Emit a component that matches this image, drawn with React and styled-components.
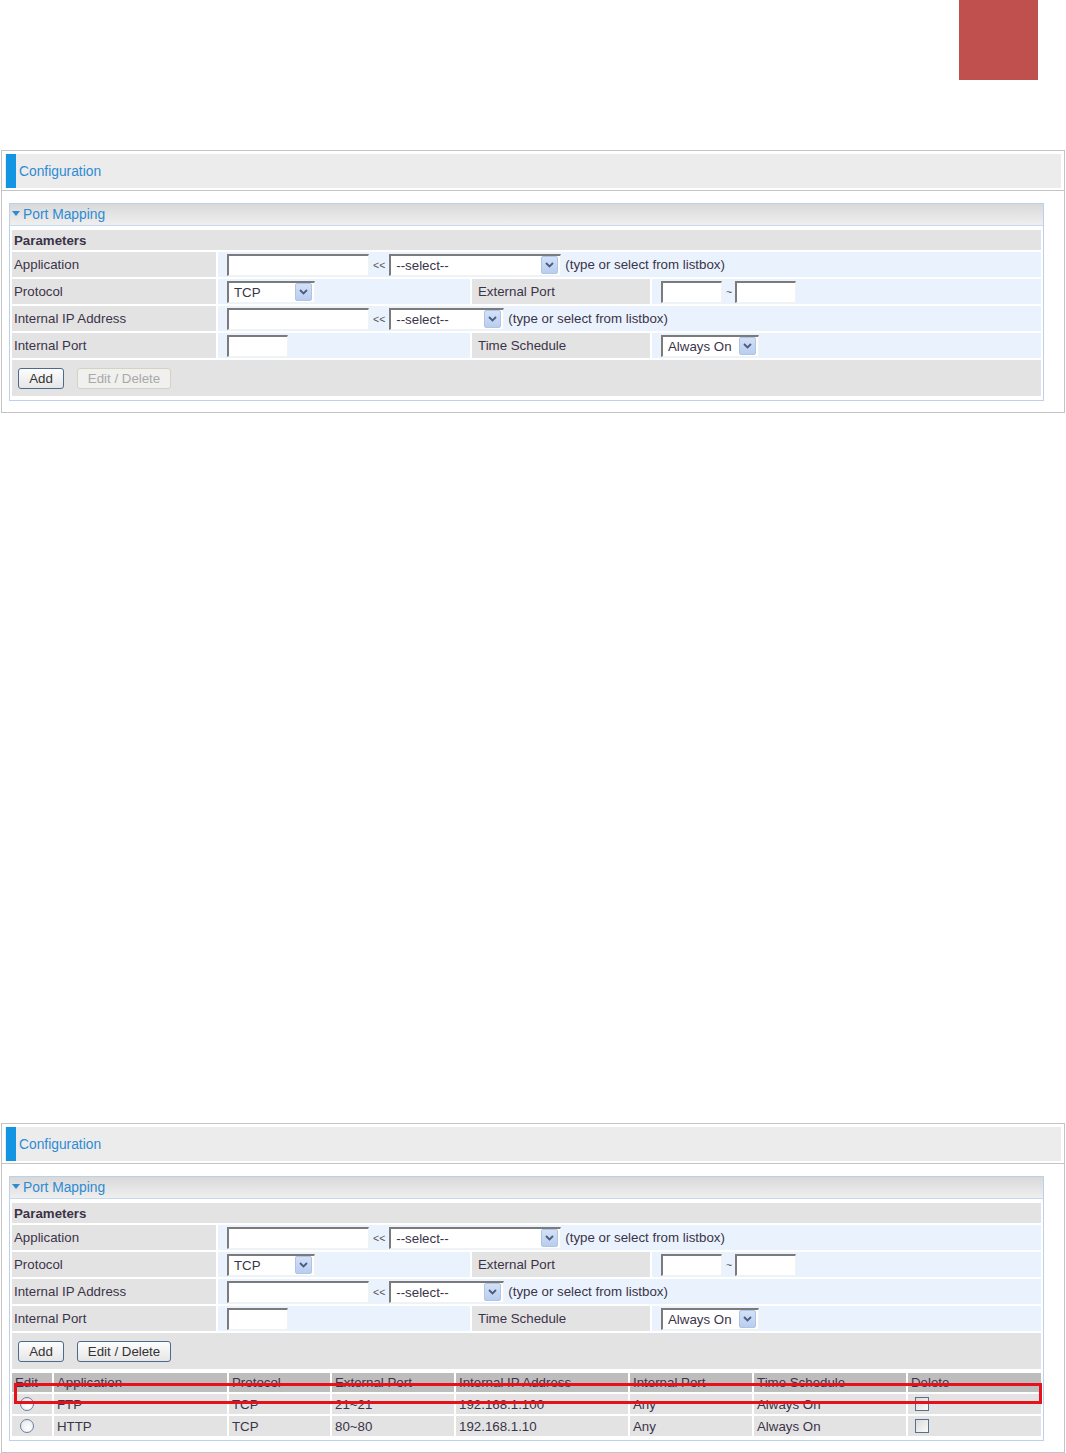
import React from 'react'
import styled, { createGlobalStyle } from 'styled-components'

const GlobalStyle = createGlobalStyle`
  body {
    margin: 0;
    background: #fff;
    font-family: "Liberation Sans", Arial, sans-serif;
    font-size: 13.3px;
    color: #3b3348;
  }
`;

const Page = styled.div`
  width: 1066px;
`;

const TopBar = styled.div`
  height: 150px;
  display: flex;
  justify-content: flex-end;
  padding-right: 28px;
  box-sizing: border-box;
`;

const RedBlock = styled.div`
  width: 79px;
  height: 80px;
  background: #c0504d;
`;

const Panel = styled.div`
  margin: ${(p) => (p.second ? '710px' : '0')} 1px 0 1px;
  border: 1px solid #c4c4c4;
`;

const ConfigHead = styled.div`
  padding: 3px 3px 2px;
  border-bottom: 1px solid #c4c4c4;
`;

const ConfigTitle = styled.div`
  height: 34px;
  background: #ececec;
  display: flex;
  align-items: center;
  padding-left: 1px;
  color: #2e8bd3;
  font-size: 13.8px;
`;

const BlueBar = styled.span`
  width: 10px;
  height: 34px;
  background: #1495e3;
  margin-right: 3px;
`;

const PanelBody = styled.div`
  padding: 12px 20px 11px 7px;
`;

const Box = styled.div`
  border: 1px solid #bcd1e9;
  padding-bottom: 2px;
`;

const BoxHead = styled.div`
  height: 21px;
  display: flex;
  align-items: center;
  padding-left: 2px;
  background: linear-gradient(#d9d9d9, #efefef);
  border-bottom: 1px solid #c7d9ee;
  color: #2e8bd3;
  font-size: 13.8px;
`;

const Caret = styled.span`
  width: 0;
  height: 0;
  border-left: 4px solid transparent;
  border-right: 4px solid transparent;
  border-top: 5px solid #2e8bd3;
  margin: 0 3px 2px 0;
`;

const Table = styled.table`
  width: 100%;
  border-collapse: separate;
  border-spacing: 2px;
  table-layout: fixed;
  margin-top: ${(p) => p.mt || 0}px;
`;

const Cell = styled.td`
  height: ${(p) => p.h || 25}px;
  padding: 0 0 0 ${(p) => p.pad ?? 2}px;
  background: ${(p) =>
    p.kind === 'value' ? '#eaf3fd' : p.kind === 'head' ? '#bdbdbd' : '#e3e3e3'};
  font-weight: ${(p) => (p.bold ? 'bold' : 'normal')};
  white-space: nowrap;
  vertical-align: middle;
`;

const Inline = styled.div`
  display: flex;
  align-items: center;
`;

const TextInput = styled.input`
  box-sizing: border-box;
  width: ${(p) => p.w}px;
  height: 22px;
  margin: 0;
  padding: 0 4px;
  background: #fff;
  border-style: solid;
  border-width: 2px 1px 1px 2px;
  border-color: #7b7b7b #f2f2ee #f2f2ee #7b7b7b;
  font: inherit;
`;

const Select = styled.div`
  box-sizing: border-box;
  width: ${(p) => p.w}px;
  height: 22px;
  display: flex;
  align-items: center;
  justify-content: space-between;
  padding: 0 2px 0 5px;
  background: #fff;
  border-style: solid;
  border-width: 2px 1px 1px 2px;
  border-color: #7b7b7b #f2f2ee #f2f2ee #7b7b7b;
`;

const ArrowBox = styled.span`
  width: 15px;
  height: 16px;
  border: 1px solid #b0c4e6;
  border-radius: 2px;
  background: linear-gradient(#d3e1f7, #b9cdef);
  display: flex;
  align-items: center;
  justify-content: center;
`;

const Sep = styled.span`
  font-size: 10.5px;
  color: #555;
  margin: 0 ${(p) => p.r || 4}px 0 4px;
`;

const Note = styled.span`
  margin-left: 4px;
`;

const Button = styled.button`
  height: 21px;
  width: ${(p) => p.w}px;
  margin-right: ${(p) => p.mr || 0}px;
  padding: 0;
  font: inherit;
  border-radius: 3px;
  border: 1px solid ${(p) => (p.disabled ? '#d6d2c2' : '#4b6a8e')};
  background: ${(p) =>
    p.disabled ? '#f0f0ee' : 'linear-gradient(#fdfdfd, #e6e6e6)'};
  color: ${(p) => (p.disabled ? '#a9a9a9' : '#333')};
`;

const ListWrap = styled.div`
  position: relative;
`;

const Radio = styled.span`
  display: block;
  width: 12px;
  height: 12px;
  margin-left: 6px;
  border-radius: 50%;
  border: 1px solid #6c7f99;
  background: radial-gradient(circle at 60% 65%, #fff, #dfe4ea);
`;

const Check = styled.span`
  display: block;
  width: 12px;
  height: 12px;
  margin-left: 5px;
  border: 1px solid #5a6f8c;
  background: linear-gradient(135deg, #dcdcdc, #fafafa);
`;

const Highlight = styled.div`
  position: absolute;
  left: 4px;
  top: 12px;
  width: 1028px;
  height: 21px;
  box-sizing: border-box;
  border: 3px solid #e6121b;
  pointer-events: none;
`;

const Chevron = () => (
  <svg width="9" height="6" viewBox="0 0 9 6">
    <path d="M1 1 L4.5 4.5 L8 1" fill="none" stroke="#4a5d80" strokeWidth="1.8" />
  </svg>
);

const Drop = ({ w, value }) => (
  <Select w={w}>
    <span>{value}</span>
    <ArrowBox>
      <Chevron />
    </ArrowBox>
  </Select>
);

const columns = [
  ['Edit', 40],
  ['Application', 173],
  ['Protocol', 101],
  ['External Port', 122],
  ['Internal IP Address', 172],
  ['Internal Port', 122],
  ['Time Schedule', 152],
  ['Delete', 133],
];

const entries = [
  ['FTP', 'TCP', '21~21', '192.168.1.100', 'Any', 'Always On'],
  ['HTTP', 'TCP', '80~80', '192.168.1.10', 'Any', 'Always On'],
];

const MappingForm = ({ canEdit }) => (
  <Table mt={2}>
    <colgroup>
      <col style={{ width: 204 }} />
      <col style={{ width: 252 }} />
      <col style={{ width: 178 }} />
      <col />
    </colgroup>
    <tbody>
      <tr>
        <Cell colSpan={4} bold h={20}>Parameters</Cell>
      </tr>
      <tr>
        <Cell>Application</Cell>
        <Cell kind="value" colSpan={3} pad={9}>
          <Inline>
            <TextInput w={142} />
            <Sep>&lt;&lt;</Sep>
            <Drop w={172} value="--select--" />
            <Note>(type or select from listbox)</Note>
          </Inline>
        </Cell>
      </tr>
      <tr>
        <Cell>Protocol</Cell>
        <Cell kind="value" pad={9}>
          <Drop w={88} value="TCP" />
        </Cell>
        <Cell pad={6}>External Port</Cell>
        <Cell kind="value" pad={9}>
          <Inline>
            <TextInput w={61} />
            <Sep r={3}>~</Sep>
            <TextInput w={61} />
          </Inline>
        </Cell>
      </tr>
      <tr>
        <Cell>Internal IP Address</Cell>
        <Cell kind="value" colSpan={3} pad={9}>
          <Inline>
            <TextInput w={142} />
            <Sep>&lt;&lt;</Sep>
            <Drop w={115} value="--select--" />
            <Note>(type or select from listbox)</Note>
          </Inline>
        </Cell>
      </tr>
      <tr>
        <Cell>Internal Port</Cell>
        <Cell kind="value" pad={9}>
          <TextInput w={61} />
        </Cell>
        <Cell pad={6}>Time Schedule</Cell>
        <Cell kind="value" pad={9}>
          <Drop w={98} value="Always On" />
        </Cell>
      </tr>
      <tr>
        <Cell colSpan={4} h={36} pad={6}>
          <Button w={46} mr={13}>Add</Button>
          <Button w={94} disabled={!canEdit}>Edit / Delete</Button>
        </Cell>
      </tr>
    </tbody>
  </Table>
);

const MappingList = () => (
  <ListWrap>
    <Table>
      <colgroup>
        {columns.map(([name, w]) => (
          <col key={name} style={{ width: w }} />
        ))}
      </colgroup>
      <tbody>
        <tr>
          {columns.map(([name]) => (
            <Cell key={name} kind="head" h={19} pad={3}>{name}</Cell>
          ))}
        </tr>
        {entries.map((row) => (
          <tr key={row[0]}>
            <Cell h={20}><Radio /></Cell>
            {row.map((v, i) => (
              <Cell key={i} h={20} pad={3}>{v}</Cell>
            ))}
            <Cell h={20}><Check /></Cell>
          </tr>
        ))}
      </tbody>
    </Table>
    <Highlight />
  </ListWrap>
);

const ConfigPanel = ({ second, children }) => (
  <Panel second={second}>
    <ConfigHead>
      <ConfigTitle>
        <BlueBar />
        Configuration
      </ConfigTitle>
    </ConfigHead>
    <PanelBody>
      <Box>
        <BoxHead>
          <Caret />
          Port Mapping
        </BoxHead>
        {children}
      </Box>
    </PanelBody>
  </Panel>
);

export default function App() {
  return (
    <Page>
      <GlobalStyle />
      <TopBar>
        <RedBlock />
      </TopBar>
      <ConfigPanel>
        <MappingForm />
      </ConfigPanel>
      <ConfigPanel second>
        <MappingForm canEdit />
        <MappingList />
      </ConfigPanel>
    </Page>
  )
}
